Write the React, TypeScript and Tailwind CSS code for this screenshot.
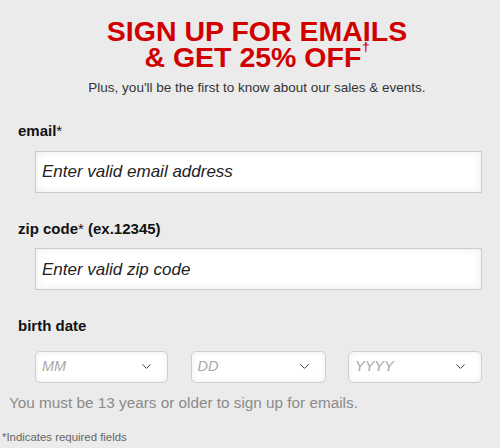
import { ChevronDown } from 'lucide-react';

const font = { fontFamily: '"Liberation Sans", Arial, sans-serif' };

function DateSelect({ label, width }: { label: string; width: string }) {
  return (
    <div
      className={`${width} h-[32px] rounded-[5px] border border-[#cfcfcf] bg-white shadow-[inset_0_0_6px_rgba(0,0,0,0.08)] flex items-center justify-between pl-[6px] pr-[13px]`}
    >
      <span className="text-[14.5px] italic text-[#a8a8a8]">{label}</span>
      <ChevronDown size={15} strokeWidth={1.5} className="text-[#333]" />
    </div>
  );
}

export default function App() {
  return (
    <div className="w-[500px] h-[448px] bg-[#ebebeb] text-[#222] overflow-hidden" style={font}>
      <div className="flex flex-col items-center pt-[18px] pl-[14px]">
        <h1 className="text-[28.5px] leading-[26px] font-bold text-[#d10000] text-center">
          SIGN UP FOR EMAILS
          <br />& GET 25% OFF
          <span className="text-[13px] leading-[0] align-top relative top-[3px] ml-[1px]">†</span>
        </h1>
        <p className="mt-[8px] text-[13.5px] text-[#333]">
          Plus, you'll be the first to know about our sales &amp; events.
        </p>
      </div>

      <div className="flex flex-col pl-[18px] pr-[18px] mt-[22px]">
        <label className="text-[15px] font-bold text-[#111]">
          email<span className="font-normal">*</span>
        </label>
        <div className="ml-[17px] mt-[8px] h-[42px] border border-[#cccccc] bg-white shadow-[inset_0_0_8px_rgba(0,0,0,0.08)] flex items-center px-[6px]">
          <span className="text-[17px] italic text-[#222]">Enter valid email address</span>
        </div>

        <label className="mt-[25px] text-[15px] font-bold text-[#111]">
          zip code<span className="font-normal">*</span> (ex.12345)
        </label>
        <div className="ml-[17px] mt-[8px] h-[42px] border border-[#cccccc] bg-white shadow-[inset_0_0_8px_rgba(0,0,0,0.08)] flex items-center px-[6px]">
          <span className="text-[17px] italic text-[#222]">Enter valid zip code</span>
        </div>

        <label className="mt-[25px] text-[15px] font-bold text-[#111]">birth date</label>
        <div className="ml-[17px] mt-[13px] flex justify-between">
          <DateSelect label="MM" width="w-[133px]" />
          <DateSelect label="DD" width="w-[135px]" />
          <DateSelect label="YYYY" width="w-[134px]" />
        </div>
      </div>

      <p className="mt-[9px] ml-[9px] text-[15.3px] text-[#8a8a8a]">
        You must be 13 years or older to sign up for emails.
      </p>
      <p className="mt-[14px] ml-[2px] text-[11.4px] text-[#666]">*Indicates required fields</p>
    </div>
  );
}
